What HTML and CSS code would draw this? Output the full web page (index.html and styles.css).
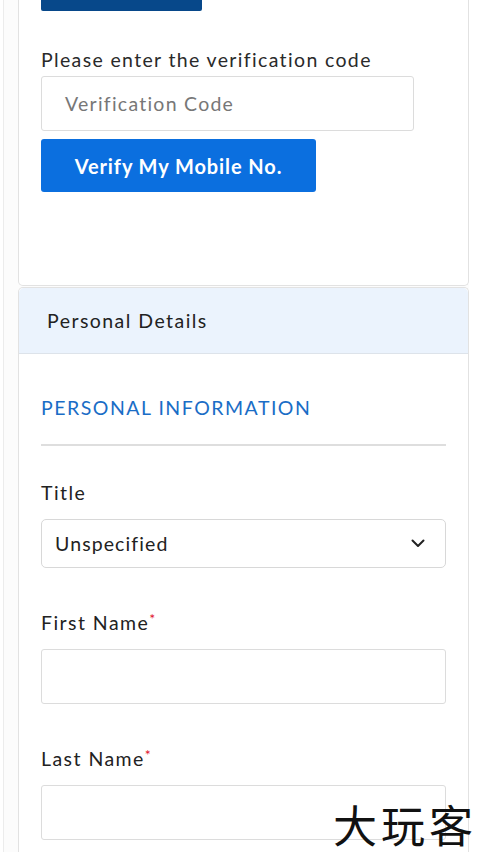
FILE: index.html
```
<!DOCTYPE html>
<html lang="en">
<head>
<meta charset="utf-8">
<title>Personal Details</title>
<link rel="stylesheet" href="styles.css">
</head>
<body>
<div class="page">
  <div class="card card-top">
    <div class="card-body">
      <div class="prev-button"></div>
      <div class="hint">Please enter the verification code</div>
      <div class="input code-input"><span class="placeholder">Verification Code</span></div>
      <button class="verify-btn">Verify My Mobile No.</button>
    </div>
  </div>
  <div class="card card-details">
    <div class="card-header">Personal Details</div>
    <div class="card-body">
      <div class="section-title">PERSONAL INFORMATION</div>
      <div class="divider"></div>
      <div class="label label-first">Title</div>
      <div class="select">
        <span>Unspecified</span>
        <svg class="chev" width="14" height="9" viewBox="0 0 14 9"><path d="M1.5 1.5 L7 7 L12.5 1.5" fill="none" stroke="#222" stroke-width="2" stroke-linecap="round" stroke-linejoin="round"/></svg>
      </div>
      <div class="label">First Name<span class="req">*</span></div>
      <div class="input text-input"></div>
      <div class="label">Last Name<span class="req">*</span></div>
      <div class="input text-input"></div>
    </div>
  </div>
</div>
<div class="watermark">大玩客</div>
</body>
</html>
```
FILE: styles.css
```
html, body {
  margin: 0;
  padding: 0;
  background: #ffffff;
  height: 852px;
  overflow: hidden;
}
body {
  font-family: "Lato", "Liberation Sans", sans-serif;
  color: #222;
  position: relative;
}
.page {
  margin-left: 3px;
  border-left: 1px solid #ececec;
  padding-left: 14px;
  width: 451px;
  height: 852px;
  background: #fcfcfc;
}
.card {
  background: #fff;
  border: 1px solid #e2e2e2;
  border-radius: 5px;
  width: 449px;
}
.card-top {
  border-top: none;
  border-radius: 0 0 5px 5px;
}
.card-body {
  padding: 0 22px;
}
.card-top .card-body {
  padding-bottom: 93px;
}
.prev-button {
  width: 161px;
  height: 11px;
  background: #07488a;
  border-radius: 0 0 2px 2px;
}
.hint {
  margin-top: 37px;
  font-size: 19.5px;
  line-height: 24px;
  letter-spacing: 1.35px;
  color: #2a2a2a;
}
.input {
  box-sizing: border-box;
  border: 1px solid #dcdcdc;
  border-radius: 3px;
  background: #fff;
}
.code-input {
  margin-top: 4px;
  width: 373px;
  height: 55px;
  display: flex;
  align-items: center;
  padding-left: 23px;
}
.placeholder {
  font-size: 19.5px;
  color: #777;
  letter-spacing: 1.25px;
}
.verify-btn {
  display: block;
  margin-top: 8px;
  width: 275px;
  height: 53px;
  border: none;
  border-radius: 3px;
  background: #0b6fdf;
  color: #fff;
  font-family: "Lato", "Liberation Sans", sans-serif;
  font-weight: 700;
  font-size: 20px;
  letter-spacing: 0.9px;
  padding: 0;
}
.card-details {
  margin-top: 1px;
  height: 600px;
  border-bottom: none;
  border-radius: 5px 5px 0 0;
}
.card-header {
  height: 65px;
  background: #ebf3fd;
  border-bottom: 1px solid #dde3ea;
  border-radius: 5px 5px 0 0;
  display: flex;
  align-items: center;
  padding-left: 28px;
  font-size: 19.5px;
  color: #222;
  letter-spacing: 1.45px;
}
.section-title {
  margin-top: 42px;
  font-size: 19.5px;
  line-height: 24px;
  color: #1a6dc6;
  letter-spacing: 1.5px;
}
.divider {
  margin-top: 24px;
  height: 2px;
  background: #dedede;
  width: 405px;
}
.label {
  margin-top: 43px;
  font-size: 19.5px;
  line-height: 24px;
  letter-spacing: 1.45px;
  color: #222;
}
.label-first {
  margin-top: 35px;
}
.req {
  color: #e0102b;
  font-size: 14px;
  vertical-align: top;
  line-height: 16px;
  margin-left: 0;
  letter-spacing: 0;
}
.select {
  box-sizing: border-box;
  margin-top: 14px;
  width: 405px;
  height: 49px;
  border: 1px solid #d8d8d8;
  border-radius: 5px;
  display: flex;
  align-items: center;
  justify-content: space-between;
  padding: 0 20px 0 13px;
  font-size: 19.5px;
  letter-spacing: 1.1px;
  color: #222;
}
.chev {
  display: block;
}
.text-input {
  margin-top: 14px;
  width: 405px;
  height: 55px;
}
.watermark {
  position: absolute;
  left: 333px;
  top: 800px;
  font-family: "Noto Sans CJK SC", sans-serif;
  font-size: 44px;
  line-height: 48px;
  color: #111;
  letter-spacing: 4px;
}
```
